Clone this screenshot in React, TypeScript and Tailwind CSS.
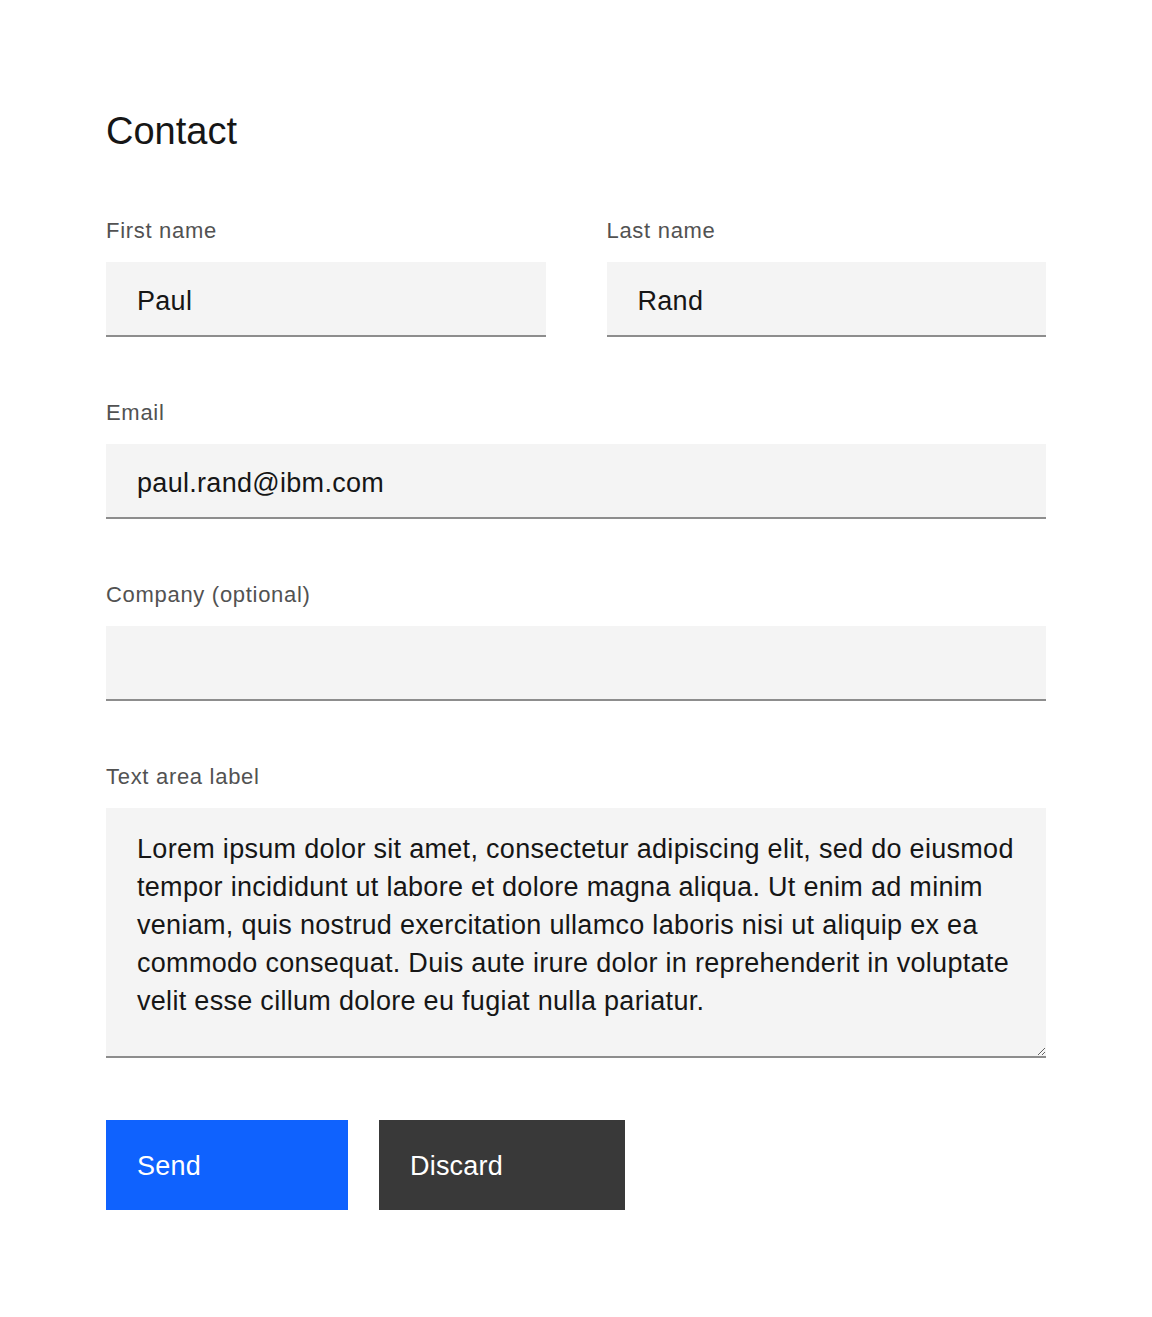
import * as React from 'react'

const font = { fontFamily: '"Liberation Sans", Arial, sans-serif' }

function Field({
  label,
  value,
  className = '',
}: {
  label: string
  value: string
  className?: string
}) {
  const [val, setVal] = React.useState(value)
  return (
    <div className={className}>
      <label className="block text-[22px] leading-[28px] tracking-[0.7px] text-[#525252]">
        {label}
      </label>
      <input
        value={val}
        onChange={(e) => setVal(e.target.value)}
        className="mt-[17px] block h-[75px] w-full border-b-2 border-[#8d8d8d] bg-[#f4f4f4] px-[31px] pt-[5px] text-[27px] tracking-[0.3px] text-[#161616] outline-none"
      />
    </div>
  )
}

const LOREM =
  'Lorem ipsum dolor sit amet, consectetur adipiscing elit, sed do eiusmod tempor incididunt ut labore et dolore magna aliqua. Ut enim ad minim veniam, quis nostrud exercitation ullamco laboris nisi ut aliquip ex ea commodo consequat. Duis aute irure dolor in reprehenderit in voluptate velit esse cillum dolore eu fugiat nulla pariatur.'

export default function App() {
  const [message, setMessage] = React.useState(LOREM)

  return (
    <div className="min-h-screen bg-white px-[106px] pt-[107px] pb-[100px]" style={font}>
      <form className="w-[940px]" onSubmit={(e) => e.preventDefault()}>
        <h1 className="text-[38px] leading-[48px] text-[#161616]">Contact</h1>

        <div className="mt-[62px] grid grid-cols-2 gap-x-[61px]">
          <Field label="First name" value="Paul" />
          <Field label="Last name" value="Rand" />
        </div>

        <Field className="mt-[62px]" label="Email" value="paul.rand@ibm.com" />
        <Field className="mt-[62px]" label="Company (optional)" value="" />

        <div className="mt-[62px]">
          <label className="block text-[22px] leading-[28px] tracking-[0.7px] text-[#525252]">
            Text area label
          </label>
          <textarea
            value={message}
            onChange={(e) => setMessage(e.target.value)}
            className="mt-[17px] block h-[250px] w-full resize-y border-b-2 border-[#8d8d8d] bg-[#f4f4f4] px-[31px] pt-[22px] text-[27px] leading-[38px] tracking-[0.3px] text-[#161616] outline-none"
          />
        </div>

        <div className="mt-[62px] flex gap-[31px]">
          <button
            type="submit"
            className="h-[90px] w-[242px] bg-[#0f62fe] pl-[31px] pt-[3px] text-left text-[27px] tracking-[0.2px] text-white"
          >
            Send
          </button>
          <button
            type="button"
            className="h-[90px] w-[246px] bg-[#393939] pl-[31px] pt-[3px] text-left text-[27px] tracking-[0.2px] text-white"
          >
            Discard
          </button>
        </div>
      </form>
    </div>
  )
}
